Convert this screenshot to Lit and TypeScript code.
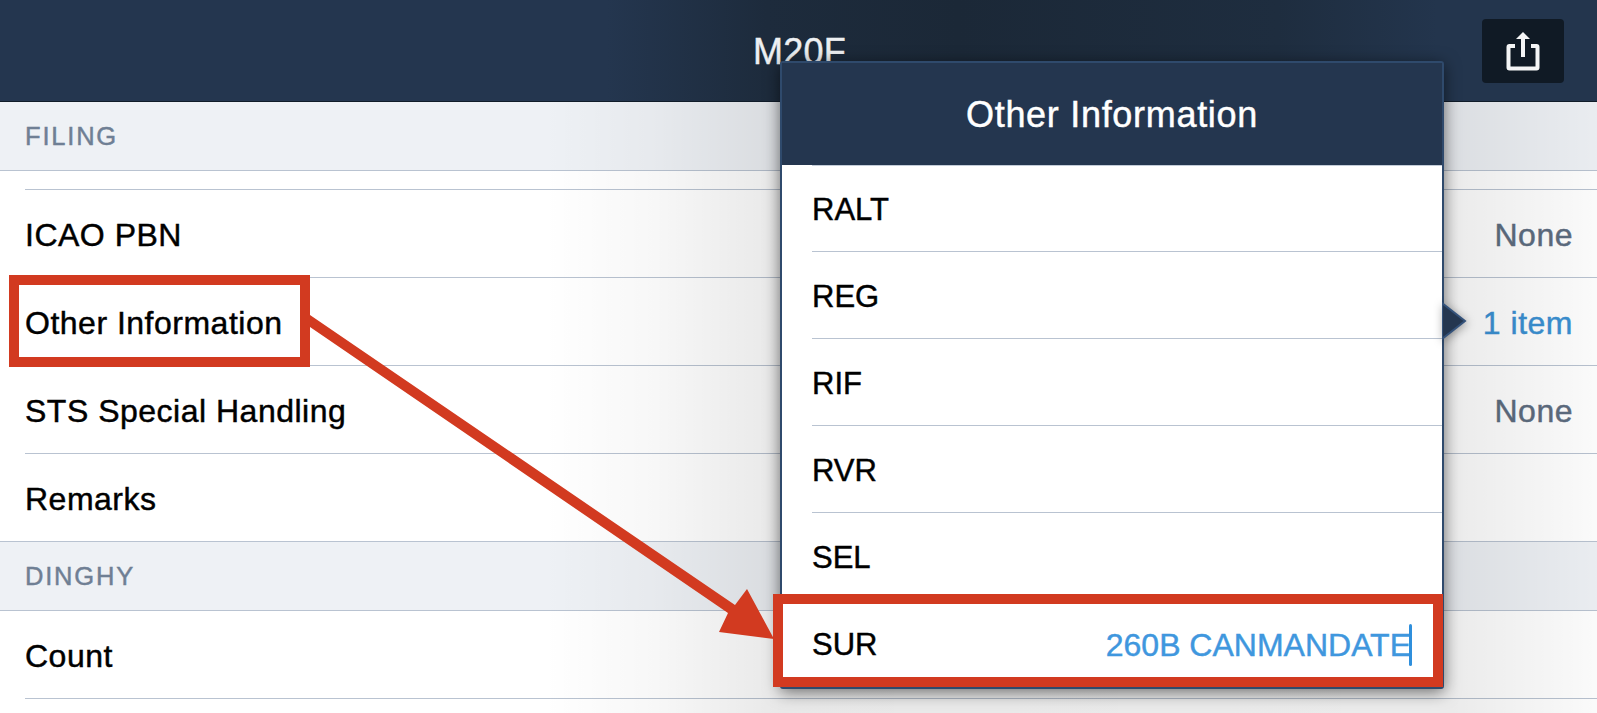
import { LitElement, html, css, svg } from "lit";
import { customElement } from "lit/decorators.js";

const page = [
  { kind: "section", label: "FILING" },
  { kind: "spacer" },
  { kind: "row", label: "ICAO PBN", value: "None" },
  { kind: "row", label: "Other Information", value: "1 item", active: true },
  { kind: "row", label: "STS Special Handling", value: "None" },
  { kind: "row", label: "Remarks", last: true },
  { kind: "section", label: "DINGHY", ruled: true },
  { kind: "row", label: "Count" },
];
const options = ["RALT", "REG", "RIF", "RVR", "SEL"];

@customElement("app-root")
export class AppRoot extends LitElement {
  static styles = css`
    :host {
      display: block;
      position: relative;
      width: 1597px;
      height: 713px;
      overflow: hidden;
      background: #fff;
      font-family: "Liberation Sans", Arial, sans-serif;
      font-size: 32px;
      color: #000;
      -webkit-text-stroke: 0.45px currentColor;
    }
    .nav {
      box-sizing: border-box;
      height: 102px;
      display: flex;
      align-items: flex-start;
      justify-content: center;
      position: relative;
      background: linear-gradient(90deg, #24364f 0%, #24364f 38%, #1d2b3c 48%, #1b2837 60%, #1e2d3f 80%, #23354d 90%);
      border-bottom: 1px solid #101c29;
    }
    .nav-title {
      font-size: 36px;
      line-height: 40px;
      margin-top: 32px;
      margin-left: 2px;
      letter-spacing: 0.2px;
      color: #eef0f2;
    }
    .share {
      position: absolute;
      left: 1482px;
      top: 19px;
      width: 82px;
      height: 64px;
      border-radius: 4px;
      background: #101a25;
      display: flex;
      align-items: center;
      justify-content: center;
    }
    .share svg { display: block; }
    .section {
      box-sizing: border-box;
      height: 69px;
      padding-left: 25px;
      display: flex;
      align-items: center;
      background: #eef1f5;
      border-bottom: 1px solid #b9c3d1;
      font-size: 25.5px;
      color: #6f7f94;
      letter-spacing: 1.8px;
    }
    .section.ruled {
      height: 70px;
      border-top: 1px solid #b9c3d1;
    }
    .spacer {
      box-sizing: border-box;
      height: 19px;
      margin-left: 25px;
      border-bottom: 1px solid #b9c3d1;
    }
    .row {
      box-sizing: border-box;
      height: 88px;
      margin-left: 25px;
      padding: 3px 24px 0 0;
      display: flex;
      align-items: center;
      justify-content: space-between;
      border-bottom: 1px solid #b9c3d1;
      letter-spacing: 0.5px;
    }
    .row.last { height: 87px; border-bottom: 0; }
    .value { color: #5d6c7f; }
    .value.active { color: #3a90d2; }
    .gloom {
      position: absolute;
      left: 0;
      right: 0;
      top: 102px;
      bottom: 0;
      background: linear-gradient(
        90deg,
        rgba(0, 0, 0, 0) 34%,
        rgba(0, 0, 0, 0.03) 41%,
        rgba(0, 0, 0, 0.09) 49%,
        rgba(0, 0, 0, 0.08) 91%,
        rgba(0, 0, 0, 0.02) 100%
      );
    }
    .popover {
      box-sizing: border-box;
      position: absolute;
      left: 780px;
      top: 61px;
      width: 664px;
      height: 628px;
      background: #fff;
      border: 2px solid #2f4a6c;
      border-radius: 3px;
      box-shadow: 0 3px 16px rgba(0, 0, 0, 0.55);
      display: flex;
      flex-direction: column;
    }
    .pop-title {
      box-sizing: border-box;
      height: 102px;
      flex: none;
      padding-top: 2px;
      display: flex;
      align-items: center;
      justify-content: center;
      background: #24364f;
      color: #fff;
      font-size: 36px;
      letter-spacing: 0.7px;
    }
    .options {
      flex: 1;
      display: grid;
      grid-auto-rows: 1fr;
    }
    .option {
      box-sizing: border-box;
      margin-left: 30px;
      padding: 3px 30px 0 0;
      display: flex;
      align-items: center;
      justify-content: space-between;
      border-bottom: 1px solid #b9c3d1;
      font-size: 31px;
    }
    .option:first-child { border-top: 1px solid #c3ccd8; }
    .option:last-child { border-bottom: 0; }
    .entry {
      display: flex;
      align-items: center;
      color: #3f97de;
      font-size: 32px;
    }
    .cursor {
      width: 3px;
      height: 42px;
      margin-left: -2px;
      border-radius: 2px;
      background: #2f8fdc;
    }
    .pointer {
      position: absolute;
      left: 1442px;
      top: 302px;
      display: block;
      filter: drop-shadow(1px 2px 5px rgba(0, 0, 0, 0.35));
    }
    .box {
      box-sizing: border-box;
      position: absolute;
      border: 10px solid #d23a20;
    }
    .box-a { left: 9px; top: 275px; width: 301px; height: 92px; }
    .box-b { left: 773px; top: 594px; width: 670px; height: 93px; }
    .arrow {
      position: absolute;
      left: 0;
      top: 0;
      display: block;
    }
  `;

  render() {
    return html`
      <div class="nav">
        <div class="nav-title">M20F</div>
        <div class="share">
          <svg width="36" height="42" viewBox="0 0 36 42" fill="none">
            ${svg`<path d="M10 16H4.5a1 1 0 0 0-1 1v20.5a1 1 0 0 0 1 1h27a1 1 0 0 0 1-1V17a1 1 0 0 0-1-1H26" stroke="#f4f5f6" stroke-width="4"/>
            <path d="M18 27V7" stroke="#f4f5f6" stroke-width="4"/>
            <path d="M18 2 25 9H11Z" fill="#f4f5f6"/>`}
          </svg>
        </div>
      </div>
      ${page.map((item) => {
        if (item.kind === "section")
          return html`<div class="section ${item.ruled ? "ruled" : ""}">${item.label}</div>`;
        if (item.kind === "spacer") return html`<div class="spacer"></div>`;
        return html`<div class="row ${item.last ? "last" : ""}">
          <span>${item.label}</span>
          ${item.value
            ? html`<span class="value ${item.active ? "active" : ""}">${item.value}</span>`
            : ""}
        </div>`;
      })}
      <div class="gloom"></div>
      <div class="popover">
        <div class="pop-title">Other Information</div>
        <div class="options">
          ${options.map((o) => html`<div class="option"><span>${o}</span></div>`)}
          <div class="option">
            <span>SUR</span>
            <span class="entry">260B CANMANDATE<span class="cursor"></span></span>
          </div>
        </div>
      </div>
      <svg class="pointer" width="26" height="38" viewBox="0 0 26 38">
        <path d="M0 1 23 19 0 37Z" fill="#24364f" stroke="#34527a" stroke-width="2"/>
      </svg>
      <div class="box box-a"></div>
      <div class="box box-b"></div>
      <svg class="arrow" width="1597" height="713" viewBox="0 0 1597 713">
        <polygon points="310,315 735,605 747,589 774,639 719,632 728,613 310,327" fill="#d23a20"/>
      </svg>
    `;
  }
}
